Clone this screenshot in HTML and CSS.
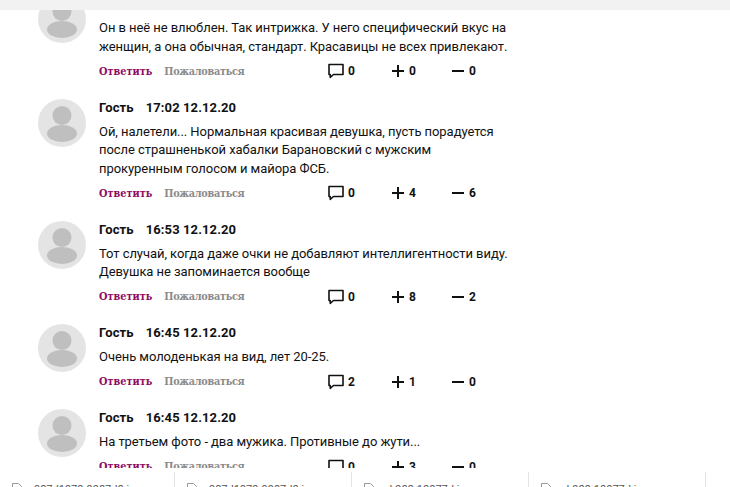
FILE: index.html
```html
<!DOCTYPE html>
<html lang="ru">
  <head>
    <meta charset="UTF-8" />
    <title>Комментарии</title>
    <link rel="stylesheet" href="styles.css">
  </head>
  <body>
    <svg class="icon-defs" width="0" height="0">
      <symbol id="icon-avatar" viewBox="0 0 48 48">
        <circle cx="24" cy="24" r="24" fill="#e4e4e4" />
        <circle cx="24" cy="16.5" r="9.5" fill="#bfbfbf" />
        <ellipse cx="24" cy="34.5" rx="15" ry="8.5" fill="#bfbfbf" />
      </symbol>
      <symbol id="icon-comment" viewBox="0 0 16 16">
        <path d="M1 1.5h14v10H5.5L2.2 14.3V11.5H1z" fill="none" stroke="#111" stroke-width="1.6" stroke-linejoin="round" />
      </symbol>
      <symbol id="icon-plus" viewBox="0 0 12 12">
        <path d="M0 6h12M6 0v12" fill="none" stroke="#111" stroke-width="2" />
      </symbol>
      <symbol id="icon-minus" viewBox="0 0 12 12">
        <path d="M0 6h12" fill="none" stroke="#111" stroke-width="2" />
      </symbol>
      <symbol id="icon-file" viewBox="0 0 10 12">
        <path d="M.5.5h6l3 3v8H.5z" fill="none" stroke="#999" />
      </symbol>
    </svg>

    <div class="top-strip"></div>

    <main class="comments">
      <article class="comment">
        <svg class="avatar"><use href="#icon-avatar" /></svg>
        <div class="comment-body">
          <div class="comment-head"><span>Гость</span><span>17:10 12.12.20</span></div>
          <p class="comment-text">Он в неё не влюблен. Так интрижка. У него специфический вкус на женщин, а она обычная, стандарт. Красавицы не всех привлекают.</p>
          <div class="comment-actions">
            <div class="links"><a class="reply">Ответить</a><a class="report">Пожаловаться</a></div>
            <div class="stat stat-comments"><svg class="ico-comment"><use href="#icon-comment" /></svg>0</div>
            <div class="stat stat-plus"><svg class="ico-sign"><use href="#icon-plus" /></svg>0</div>
            <div class="stat"><svg class="ico-sign"><use href="#icon-minus" /></svg>0</div>
          </div>
        </div>
      </article>

      <article class="comment">
        <svg class="avatar"><use href="#icon-avatar" /></svg>
        <div class="comment-body">
          <div class="comment-head"><span>Гость</span><span>17:02 12.12.20</span></div>
          <p class="comment-text">Ой, налетели... Нормальная красивая девушка, пусть порадуется после страшненькой хабалки Барановский с мужским прокуренным голосом и майора ФСБ.</p>
          <div class="comment-actions">
            <div class="links"><a class="reply">Ответить</a><a class="report">Пожаловаться</a></div>
            <div class="stat stat-comments"><svg class="ico-comment"><use href="#icon-comment" /></svg>0</div>
            <div class="stat stat-plus"><svg class="ico-sign"><use href="#icon-plus" /></svg>4</div>
            <div class="stat"><svg class="ico-sign"><use href="#icon-minus" /></svg>6</div>
          </div>
        </div>
      </article>

      <article class="comment">
        <svg class="avatar"><use href="#icon-avatar" /></svg>
        <div class="comment-body">
          <div class="comment-head"><span>Гость</span><span>16:53 12.12.20</span></div>
          <p class="comment-text">Тот случай, когда даже очки не добавляют интеллигентности виду. Девушка не запоминается вообще</p>
          <div class="comment-actions">
            <div class="links"><a class="reply">Ответить</a><a class="report">Пожаловаться</a></div>
            <div class="stat stat-comments"><svg class="ico-comment"><use href="#icon-comment" /></svg>0</div>
            <div class="stat stat-plus"><svg class="ico-sign"><use href="#icon-plus" /></svg>8</div>
            <div class="stat"><svg class="ico-sign"><use href="#icon-minus" /></svg>2</div>
          </div>
        </div>
      </article>

      <article class="comment">
        <svg class="avatar"><use href="#icon-avatar" /></svg>
        <div class="comment-body">
          <div class="comment-head"><span>Гость</span><span>16:45 12.12.20</span></div>
          <p class="comment-text">Очень молоденькая на вид, лет 20-25.</p>
          <div class="comment-actions">
            <div class="links"><a class="reply">Ответить</a><a class="report">Пожаловаться</a></div>
            <div class="stat stat-comments"><svg class="ico-comment"><use href="#icon-comment" /></svg>2</div>
            <div class="stat stat-plus"><svg class="ico-sign"><use href="#icon-plus" /></svg>1</div>
            <div class="stat"><svg class="ico-sign"><use href="#icon-minus" /></svg>0</div>
          </div>
        </div>
      </article>

      <article class="comment">
        <svg class="avatar"><use href="#icon-avatar" /></svg>
        <div class="comment-body">
          <div class="comment-head"><span>Гость</span><span>16:45 12.12.20</span></div>
          <p class="comment-text">На третьем фото - два мужика. Противные до жути...</p>
          <div class="comment-actions">
            <div class="links"><a class="reply">Ответить</a><a class="report">Пожаловаться</a></div>
            <div class="stat stat-comments"><svg class="ico-comment"><use href="#icon-comment" /></svg>0</div>
            <div class="stat stat-plus"><svg class="ico-sign"><use href="#icon-plus" /></svg>3</div>
            <div class="stat"><svg class="ico-sign"><use href="#icon-minus" /></svg>0</div>
          </div>
        </div>
      </article>
    </main>

    <footer class="downloads">
      <div class="download"><svg class="ico-file"><use href="#icon-file" /></svg><span>987d1979-9987d0.jpg</span></div>
      <div class="download"><svg class="ico-file"><use href="#icon-file" /></svg><span>987d1979-9987d0.jpg</span></div>
      <div class="download"><svg class="ico-file"><use href="#icon-file" /></svg><span>d-900-10077d.jpg</span></div>
      <div class="download"><svg class="ico-file"><use href="#icon-file" /></svg><span>d-900-10077d.jpg</span></div>
    </footer>
  </body>
</html>
```

FILE: styles.css
```css
body {
  font-family: Roboto, sans-serif;
  margin: 0;
  background-color: #ffffff;
  color: #111;
  display: flex;
  flex-direction: column;
  height: 100vh;
  overflow: hidden;
}

.icon-defs {
  display: none;
}

.top-strip {
  flex: none;
  height: 10px;
  background-color: #f2f2f2;
  position: relative;
  z-index: 1;
}

.comments {
  flex: 1;
  min-height: 0;
  overflow: hidden;
  padding-left: 38px;
}

.comment {
  display: flex;
  gap: 13px;
  padding-bottom: 18.1px;
}

.comment:first-child {
  margin-top: -14.6px;
}

.avatar {
  flex: none;
  width: 48px;
  height: 48px;
}

.comment-body {
  width: 415px;
}

.comment-head {
  display: flex;
  gap: 12px;
  font-size: 13px;
  font-weight: 700;
  letter-spacing: 0.1px;
  line-height: 18px;
}

.comment-text {
  margin: 6px 0 5.4px;
  font-size: 13px;
  letter-spacing: -0.06px;
  line-height: 18.5px;
}

.comment-actions {
  display: flex;
  align-items: center;
  height: 19px;
}

.links {
  display: flex;
  gap: 12px;
  width: 229px;
  font-family: "DejaVu Serif Condensed", "DejaVu Serif", serif;
  font-size: 10.8px;
  font-weight: 700;
}

.reply {
  color: #8e0a63;
}

.report {
  color: #8a8a8a;
  letter-spacing: -0.3px;
}

.stat {
  display: flex;
  align-items: center;
  gap: 5px;
  font-size: 12px;
  font-weight: 700;
}

.stat-comments {
  width: 64px;
  gap: 4px;
}

.stat-plus {
  width: 60px;
}

.ico-comment {
  width: 16px;
  height: 16px;
}

.ico-sign {
  width: 12px;
  height: 12px;
}

.downloads {
  flex: none;
  display: flex;
  height: 19px;
  background-color: #ffffff;
  overflow: hidden;
  position: relative;
}

.download {
  flex: none;
  box-sizing: border-box;
  width: 177px;
  height: 15px;
  margin-top: 4px;
  display: flex;
  gap: 12px;
  padding: 11px 0 0 12px;
  border-right: 1px solid #e4e4e4;
  font-size: 11px;
  color: #555;
}

.download:first-child {
  width: 175px;
}

.ico-file {
  flex: none;
  width: 10px;
  height: 12px;
}
```
